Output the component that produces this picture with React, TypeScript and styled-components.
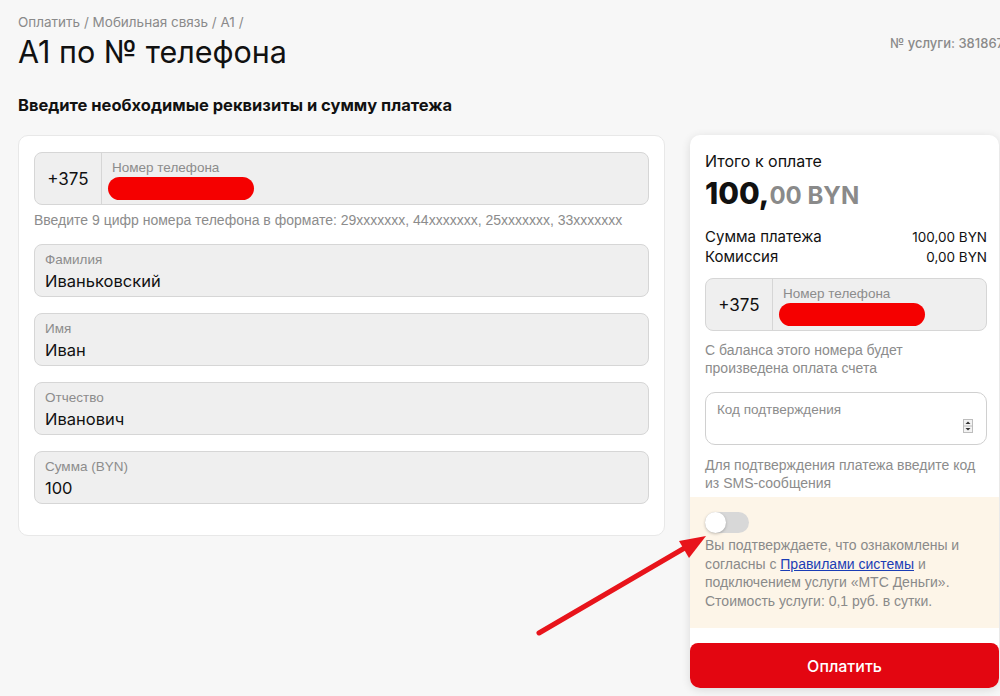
import styled, {createGlobalStyle} from "styled-components";

const GlobalStyle = createGlobalStyle`
    html, body {
        margin: 0;
        padding: 0;
        background: #f7f7f7;
        overflow: hidden;
    }
    body {
        font-family: Inter, "Liberation Sans", sans-serif;
        color: #111;
    }
`;

interface FieldData {
    label: string;
    value: string;
}

const personFields: FieldData[] = [
    {label: "Фамилия", value: "Иваньковский"},
    {label: "Имя", value: "Иван"},
    {label: "Отчество", value: "Иванович"},
    {label: "Сумма (BYN)", value: "100"},
];

function PhoneInput() {
    return (
        <PhoneBox>
            <Prefix>+375</Prefix>
            <PhoneBody>
                <FieldLabel>Номер телефона</FieldLabel>
                <Redacted />
            </PhoneBody>
        </PhoneBox>
    )
}

export default function App() {
    return (
        <Page>
            <GlobalStyle />
            <Header>
                <div>
                    <Breadcrumbs>Оплатить / Мобильная связь / А1 /</Breadcrumbs>
                    <Title>А1 по № телефона</Title>
                </div>
                <ServiceNumber>№ услуги: 381867</ServiceNumber>
            </Header>
            <Subtitle>Введите необходимые реквизиты и сумму платежа</Subtitle>
            <Columns>
                <FormCard>
                    <PhoneInput />
                    <Hint>Введите 9 цифр номера телефона в формате: 29xxxxxxx, 44xxxxxxx, 25xxxxxxx, 33xxxxxxx</Hint>
                    <FieldList>
                        {personFields.map(field => (
                            <Field key={field.label}>
                                <FieldLabel>{field.label}</FieldLabel>
                                <FieldValue>{field.value}</FieldValue>
                            </Field>
                        ))}
                    </FieldList>
                </FormCard>
                <Summary>
                    <SummaryBody>
                        <TotalLabel>Итого к оплате</TotalLabel>
                        <Total>100,<TotalCents>00 BYN</TotalCents></Total>
                        <Rows>
                            <Row><span>Сумма платежа</span><RowValue>100,00 BYN</RowValue></Row>
                            <Row><span>Комиссия</span><RowValue>0,00 BYN</RowValue></Row>
                        </Rows>
                        <PhoneInput />
                        <Note $top={10}>С баланса этого номера будет<br/>произведена оплата счета</Note>
                        <CodeField>
                            <FieldLabel>Код подтверждения</FieldLabel>
                            <Spinner>
                                <svg width="10" height="14" viewBox="0 0 10 14">
                                    <rect x="0.5" y="0.5" width="9" height="13" fill="#f3f3f3" stroke="#bdbdbd" />
                                    <line x1="0.5" y1="7" x2="9.5" y2="7" stroke="#bdbdbd" />
                                    <path d="M2.5 5 L5 2.5 L7.5 5 Z" fill="#333" />
                                    <path d="M2.5 9 L5 11.5 L7.5 9 Z" fill="#333" />
                                </svg>
                            </Spinner>
                        </CodeField>
                        <Note $top={11}>Для подтверждения платежа введите код<br/>из SMS-сообщения</Note>
                    </SummaryBody>
                    <Consent>
                        <Toggle><Knob /></Toggle>
                        <ConsentText>
                            Вы подтверждаете, что ознакомлены и<br/>
                            согласны с <RulesLink href="#">Правилами системы</RulesLink> и<br/>
                            подключением услуги «МТС Деньги».<br/>
                            Стоимость услуги: 0,1 руб. в сутки.
                        </ConsentText>
                    </Consent>
                    <PayButton>Оплатить</PayButton>
                </Summary>
            </Columns>
            <Arrow width="1000" height="696" viewBox="0 0 1000 696">
                <line x1="539" y1="633" x2="688" y2="546" stroke="#e8141b" strokeWidth="5" strokeLinecap="round" />
                <polygon points="706,536 679,541 689,558" fill="#e8141b" />
            </Arrow>
        </Page>
    )
}

const Page = styled.div`
    position: relative;
    width: 1000px;
    height: 696px;
    padding-left: 18px;
    box-sizing: border-box;
    overflow: hidden;
`;

const Header = styled.div`
    display: flex;
    justify-content: space-between;
    padding-top: 13px;
`;

const Breadcrumbs = styled.div`
    font-size: 13.5px;
    line-height: 18px;
    color: #8a8a8a;
`;

const Title = styled.h1`
    margin: 3px 0 0;
    font-size: 30.5px;
    line-height: 36px;
    font-weight: 400;
    color: #111;
`;

const ServiceNumber = styled.div`
    margin-top: 22px;
    margin-right: -4px;
    white-space: nowrap;
    font-size: 13px;
    font-weight: 500;
    color: #8a8a8a;
`;

const Subtitle = styled.h2`
    margin: 24px 0 0;
    font-size: 16.5px;
    line-height: 22px;
    font-weight: 700;
`;

const Columns = styled.div`
    display: flex;
    align-items: flex-start;
    gap: 25px;
    margin-top: 19px;
`;

const FormCard = styled.div`
    width: 647px;
    box-sizing: border-box;
    padding: 16px 15px 31px 15px;
    background: #fff;
    border: 1px solid #e8e8e8;
    border-radius: 10px;
`;

const PhoneBox = styled.div`
    display: flex;
    height: 53px;
    box-sizing: border-box;
    background: #efefef;
    border: 1px solid #d6d6d6;
    border-radius: 8px;
    overflow: hidden;
`;

const Prefix = styled.div`
    width: 66px;
    display: flex;
    align-items: center;
    justify-content: center;
    border-right: 1px solid #d6d6d6;
    font-size: 17px;
    color: #111;
`;

const PhoneBody = styled.div`
    flex: 1;
    padding: 7px 0 0 6px;
    display: flex;
    flex-direction: column;
    align-items: flex-start;
`;

const FieldLabel = styled.div`
    font-family: "Liberation Sans", Arial, sans-serif;
    font-size: 13.5px;
    line-height: 16px;
    color: #8c8c8c;
    padding-left: 4px;
`;

const Redacted = styled.div`
    width: 146px;
    height: 23px;
    margin-top: 1px;
    background: #f50000;
    border-radius: 12px;
`;

const Hint = styled.div`
    margin-top: 7px;
    font-family: "Liberation Sans", Arial, sans-serif;
    font-size: 14px;
    line-height: 16px;
    color: #8c8c8c;
`;

const FieldList = styled.div`
    display: flex;
    flex-direction: column;
    gap: 16px;
    margin-top: 16px;
`;

const Field = styled.div`
    height: 53px;
    box-sizing: border-box;
    padding: 7px 11px 0 6px;
    background: #efefef;
    border: 1px solid #d6d6d6;
    border-radius: 8px;
`;

const FieldValue = styled.div`
    padding-left: 4px;
    margin-top: 2px;
    font-size: 16.5px;
    line-height: 22px;
    color: #111;
`;

const Summary = styled.div`
    width: 309px;
    flex-shrink: 0;
    background: #fff;
    border-radius: 10px;
    box-shadow: 0 2px 10px rgba(0, 0, 0, 0.12);
    overflow: hidden;
`;

const SummaryBody = styled.div`
    padding: 15px 12px 5px 15px;
`;

const TotalLabel = styled.div`
    font-size: 16px;
    line-height: 22px;
`;

const Total = styled.div`
    margin-top: 3px;
    font-size: 30px;
    line-height: 36px;
    font-weight: 800;
    color: #111;
`;

const TotalCents = styled.span`
    font-size: 24px;
    font-weight: 700;
    color: #8a8a8a;
`;

const Rows = styled.div`
    margin: 13px 0 11px;
`;

const Row = styled.div`
    display: flex;
    justify-content: space-between;
    font-size: 15px;
    line-height: 20px;
`;

const RowValue = styled.span`
    font-size: 13.5px;
`;

const Note = styled.div<{ $top: number }>`
    margin-top: ${p => p.$top}px;
    font-family: "Liberation Sans", Arial, sans-serif;
    font-size: 14px;
    line-height: 18px;
    color: #8c8c8c;
`;

const CodeField = styled.div`
    position: relative;
    height: 53px;
    margin-top: 15px;
    box-sizing: border-box;
    padding: 9px 0 0 7px;
    background: #fff;
    border: 1px solid #d0d0d0;
    border-radius: 10px;
`;

const Spinner = styled.div`
    position: absolute;
    right: 13px;
    top: 26px;
    line-height: 0;
`;

const Consent = styled.div`
    background: #fdf5e8;
    padding: 15px 12px 18px 15px;
`;

const Toggle = styled.div`
    width: 44px;
    height: 21px;
    border-radius: 11px;
    background: #d8d8d8;
    position: relative;
`;

const Knob = styled.div`
    position: absolute;
    left: 0;
    top: 0;
    width: 21px;
    height: 21px;
    border-radius: 50%;
    background: #fff;
    box-shadow: 0 1px 3px rgba(0, 0, 0, 0.25);
`;

const ConsentText = styled.div`
    margin-top: 3px;
    font-family: "Liberation Sans", Arial, sans-serif;
    font-size: 14px;
    line-height: 18.5px;
    color: #8a8a8a;
`;

const RulesLink = styled.a`
    color: #1b3db5;
    text-decoration: underline;
`;

const PayButton = styled.button`
    display: block;
    width: 100%;
    height: 45px;
    margin-top: 15px;
    border: none;
    border-radius: 8px;
    background: #e30611;
    color: #fff;
    font-family: Inter, "Liberation Sans", sans-serif;
    font-size: 16px;
    font-weight: 500;
`;

const Arrow = styled.svg`
    position: absolute;
    left: 0;
    top: 0;
    pointer-events: none;
`;
